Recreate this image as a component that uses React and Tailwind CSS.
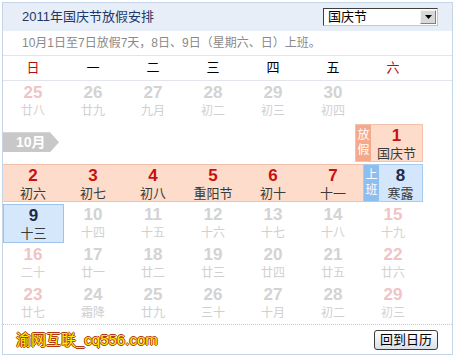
import React from "react";

const F = "font-['Liberation_Sans','Noto_Sans_CJK_SC',sans-serif]";

function Cell({ n, l, tone = "gray" }) {
  const numCls =
    tone === "pink"
      ? "text-[#f0c4c4]"
      : tone === "red"
      ? "text-[#c8110f]"
      : tone === "navy"
      ? "text-[#1e2a48]"
      : "text-[#d3d3d3]";
  const lunCls =
    tone === "red" || tone === "navy"
      ? "text-[#3a3a3a]"
      : tone === "pink"
      ? "text-[#d8d0d0]"
      : "text-[#d0d0d0]";
  return (
    <div className="flex flex-col items-center pt-[1px]">
      <div className={`text-[17px] leading-[19px] font-bold ${numCls}`}>{n}</div>
      <div className={`text-[12px] leading-[18px] ${lunCls}`}>{l}</div>
    </div>
  );
}

function Row({ items }) {
  return (
    <div className="grid grid-cols-[repeat(7,60px)] h-[38px] mb-[2px]">
      {items.map((it, i) =>
        it ? <Cell key={i} {...it} /> : <div key={i} />
      )}
    </div>
  );
}

export default function App() {
  const weekdays = ["日", "一", "二", "三", "四", "五", "六"];
  return (
    <div className={`${F} w-[456px] h-[357px] bg-white pt-[2px] pl-[2px]`}>
      <div className="w-[451px] h-[353px] border border-[#c5d5e8] flex flex-col">
        {/* header */}
        <div className="h-[28px] bg-[#e7eef8] flex items-center justify-between pl-[19px] pr-[14px]">
          <div className="text-[13px] text-[#1e3768]">2011年国庆节放假安排</div>
          <div className="w-[115px] h-[18px] bg-white border border-t-[#404040] border-l-[#404040] border-r-[#c8c8c8] border-b-[#c8c8c8] flex items-center justify-between pl-[4px] pr-[1px]">
            <span className="text-[13px] leading-[14px] text-black">国庆节</span>
            <div className="w-[16px] h-[14px] bg-[#d8d8d8] border border-t-[#f4f4f4] border-l-[#f4f4f4] border-r-[#808080] border-b-[#808080] flex items-center justify-center">
              <svg width="7" height="4" viewBox="0 0 7 4">
                <path d="M0 0h7L3.5 4z" fill="#000" />
              </svg>
            </div>
          </div>
        </div>
        {/* sub header */}
        <div className="h-[25px] border-b border-[#e2e6ec] flex items-center pl-[19px] text-[12px] text-[#8a8a8a]">
          10月1日至7日放假7天，8日、9日（星期六、日）上班。
        </div>
        {/* weekdays */}
        <div className="h-[26px] border-b border-[#e2e6ec] grid grid-cols-[repeat(7,60px)] items-center text-[13px]">
          {weekdays.map((w, i) => (
            <div
              key={w}
              className={`text-center ${i === 0 || i === 6 ? "text-[#b01010]" : "text-black"}`}
            >
              {w}
            </div>
          ))}
        </div>
        {/* grid */}
        <div className="flex-1 flex flex-col pt-[1px]">
          <Row
            items={[
              { n: 25, l: "廿八", tone: "pink" },
              { n: 26, l: "廿九" },
              { n: 27, l: "九月" },
              { n: 28, l: "初二" },
              { n: 29, l: "初三" },
              { n: 30, l: "初四" },
              null,
            ]}
          />
          {/* month row */}
          <div className="h-[42px] w-[420px] flex justify-between items-start">
            <div className="mt-[10px] h-[20px] w-[56px] bg-[#c8c8c8] [clip-path:polygon(0_0,47px_0,56px_10px,47px_20px,0_20px)] flex items-center pl-[13px] text-[14px] font-bold text-white">
              10月
            </div>
            <div className="mt-[2px] w-[68px] h-[38px] flex border border-[#f3c1aa] bg-[#fddccb]">
              <div className="w-[15px] bg-[#f5a88b] text-white text-[12px] leading-[15px] flex flex-col items-center justify-center">
                <span>放</span>
                <span>假</span>
              </div>
              <div className="flex-1 flex flex-col items-center pt-[1px]">
                <div className="text-[17px] leading-[19px] font-bold text-[#c8110f]">1</div>
                <div className="text-[13px] leading-[17px] text-[#3a3a3a]">国庆节</div>
              </div>
            </div>
          </div>
          {/* holiday row */}
          <div className="h-[38px] mb-[2px] flex">
            <div className="w-[360px] bg-[#fddccb] border-y border-[#f3c1aa] grid grid-cols-[repeat(6,60px)]">
              {[
                [2, "初六"],
                [3, "初七"],
                [4, "初八"],
                [5, "重阳节"],
                [6, "初十"],
                [7, "十一"],
              ].map(([n, l]) => (
                <div key={n} className="flex flex-col items-center pt-[1px]">
                  <div className="text-[17px] leading-[19px] font-bold text-[#c8110f]">{n}</div>
                  <div className="text-[13px] leading-[17px] text-[#3a3a3a]">{l}</div>
                </div>
              ))}
            </div>
            <div className="w-[60px] flex border border-[#a9cdf0] bg-[#d3e6fb]">
              <div className="w-[15px] bg-[#8dbef0] text-white text-[12px] leading-[15px] flex flex-col items-center justify-center">
                <span>上</span>
                <span>班</span>
              </div>
              <div className="flex-1 flex flex-col items-center pt-[1px]">
                <div className="text-[17px] leading-[19px] font-bold text-[#1e2a48]">8</div>
                <div className="text-[13px] leading-[17px] text-[#3a3a3a]">寒露</div>
              </div>
            </div>
          </div>
          <div className="grid grid-cols-[repeat(7,60px)] h-[38px] mb-[2px]">
            <div className="border border-[#9fc3ea] bg-[#d5e7fb] flex flex-col items-center pt-[1px] w-[61px]">
              <div className="text-[17px] leading-[19px] font-bold text-[#1e2a48]">9</div>
              <div className="text-[13px] leading-[17px] text-[#3a3a3a]">十三</div>
            </div>
            <Cell n={10} l="十四" />
            <Cell n={11} l="十五" />
            <Cell n={12} l="十六" />
            <Cell n={13} l="十七" />
            <Cell n={14} l="十八" />
            <Cell n={15} l="十九" tone="pink" />
          </div>
          <Row
            items={[
              { n: 16, l: "二十", tone: "pink" },
              { n: 17, l: "廿一" },
              { n: 18, l: "廿二" },
              { n: 19, l: "廿三" },
              { n: 20, l: "廿四" },
              { n: 21, l: "廿五" },
              { n: 22, l: "廿六", tone: "pink" },
            ]}
          />
          <Row
            items={[
              { n: 23, l: "廿七", tone: "pink" },
              { n: 24, l: "霜降" },
              { n: 25, l: "廿九" },
              { n: 26, l: "三十" },
              { n: 27, l: "十月" },
              { n: 28, l: "初二" },
              { n: 29, l: "初三", tone: "pink" },
            ]}
          />
        </div>
        {/* footer */}
        <div className="h-[30px] border-t border-dotted border-[#c8c8c8] flex items-center justify-between pl-[13px] pr-[14px]">
          <div className="text-[15px] leading-[18px] text-[#ffee00] [text-shadow:1px_0_#b03a10,-1px_0_#b03a10,0_1px_#b03a10,0_-1px_#b03a10]">
            渝网互联_cq556.com
          </div>
          <div className="w-[64px] h-[20px] rounded-[3px] border border-[#3c3c3c] bg-gradient-to-b from-white to-[#dcdfe8] flex items-center justify-center text-[13px] text-black">
            回到日历
          </div>
        </div>
      </div>
    </div>
  );
}
